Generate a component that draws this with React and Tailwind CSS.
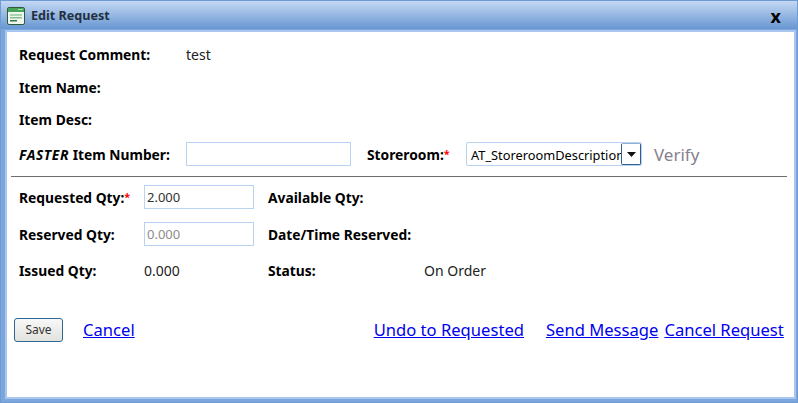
const labelCls = "pt-[2px] font-bold text-[13.8px] text-black whitespace-nowrap";
const linkCls = "shrink-0 pt-[1px] text-[16.6px] text-[#0000ee] underline whitespace-nowrap";
const inputCls = "shrink-0 h-[24px] border border-[#b9d3f2] bg-white px-[2px] text-[13px] outline-none";

function Star() {
  return <span className="text-[11px] align-[2px] text-[#f00]">*</span>;
}

function FormIcon() {
  return (
    <svg width="18" height="18" viewBox="0 0 18 18" className="shrink-0">
      <rect x="0.5" y="0.5" width="17" height="17" rx="1.5" fill="#f1f7ec" stroke="#2e5b3c" />
      <rect x="1" y="1" width="16" height="4" fill="#45a458" />
      <rect x="11" y="2" width="5" height="1" fill="#a5dba8" />
      <rect x="3" y="7" width="12" height="2" fill="#a9d4ae" />
      <rect x="3" y="10" width="12" height="1.5" fill="#86bf90" />
      <rect x="3" y="13" width="7" height="1.5" fill="#2f7a44" />
    </svg>
  );
}

export default function App() {
  return (
    <div
      className="w-[798px] h-[403px] flex flex-col overflow-hidden border border-[#6d9bd3] bg-[#7da6dc]"
      style={{ fontFamily: '"Noto Sans", "Open Sans", sans-serif' }}
    >
      <div className="h-[28px] shrink-0 flex items-center pt-[2px] pl-[6px] pr-[16px] bg-gradient-to-b from-[#c5d8f3] to-[#6897d2]">
        <FormIcon />
        <span className="ml-[6px] font-bold text-[12.6px] text-[#22303f]">Edit Request</span>
        <span className="ml-auto font-bold text-[18px] leading-none text-black">x</span>
      </div>
      <div className="flex-1 min-h-0 ml-[4px] mr-[1px] mt-[1px] mb-[3px] bg-white border-2 border-[#a9c6ee] pl-[12px] pr-[7px]">
        <div className="h-[39px] flex items-center pt-[5px]">
          <span className={`${labelCls} w-[167px]`}>Request Comment:</span>
          <span className="text-[14px] text-[#222]">test</span>
        </div>
        <div className="h-[32px] flex items-center">
          <span className={labelCls}>Item Name:</span>
        </div>
        <div className="h-[32px] flex items-center">
          <span className={labelCls}>Item Desc:</span>
        </div>
        <div className="h-[38px] flex items-center">
          <span className={`${labelCls} w-[167px]`}>
            <i className="tracking-[0.6px]">FASTER</i> Item Number:
          </span>
          <input className={`${inputCls} w-[165px]`} />
          <span className={`${labelCls} ml-[16px] w-[99px]`}>
            Storeroom:<Star />
          </span>
          <div className="shrink-0 w-[176px] h-[24px] flex items-stretch border border-[#b9d3f2] rounded-[2px]">
            <span className="flex-1 min-w-0 overflow-hidden whitespace-nowrap pl-[4px] text-[12.8px] leading-[24px] text-black">
              AT_StoreroomDescription
            </span>
            <span className="w-[20px] shrink-0 flex items-center justify-center border border-[#2f5f8f] border-t-[#8fb0d4] rounded-[2px] bg-white">
              <svg width="9" height="5" viewBox="0 0 9 5"><path d="M0 0h9L4.5 5z" fill="#111" /></svg>
            </span>
          </div>
          <span className="ml-[12px] pt-[2px] text-[17px] text-[#86808f]">Verify</span>
        </div>
        <div className="h-[1px] bg-[#6e6e6e] mt-[3px] -ml-[8px]" />
        <div className="h-[40px] flex items-center">
          <span className={`${labelCls} w-[125px]`}>
            Requested Qty:<Star />
          </span>
          <input className={`${inputCls} w-[110px] text-[#333]`} defaultValue="2.000" />
          <span className={`${labelCls} ml-[14px]`}>Available Qty:</span>
        </div>
        <div className="h-[34px] flex items-center">
          <span className={`${labelCls} w-[125px]`}>Reserved Qty:</span>
          <input className={`${inputCls} w-[110px] text-[#8d8d8d]`} defaultValue="0.000" disabled />
          <span className={`${labelCls} ml-[14px]`}>Date/Time Reserved:</span>
        </div>
        <div className="h-[38px] flex items-center">
          <span className={`${labelCls} w-[125px]`}>Issued Qty:</span>
          <span className="w-[124px] text-[14px] text-[#222]">0.000</span>
          <span className={`${labelCls} w-[156px]`}>Status:</span>
          <span className="text-[14px] text-[#222]">On Order</span>
        </div>
        <div className="flex items-center mt-[28px] -ml-[5px]">
          <button className="shrink-0 w-[49px] h-[24px] border border-[#2f6794] rounded-[3px] bg-gradient-to-b from-[#f8f8f8] to-[#e2e2de] text-[12px] text-[#333]">
            Save
          </button>
          <a className={`${linkCls} ml-[20px]`}>Cancel</a>
          <a className={`${linkCls} ml-[239px]`}>Undo to Requested</a>
          <a className={`${linkCls} ml-[22px]`}>Send Message</a>
          <a className={`${linkCls} ml-[6px]`}>Cancel Request</a>
        </div>
      </div>
    </div>
  );
}
